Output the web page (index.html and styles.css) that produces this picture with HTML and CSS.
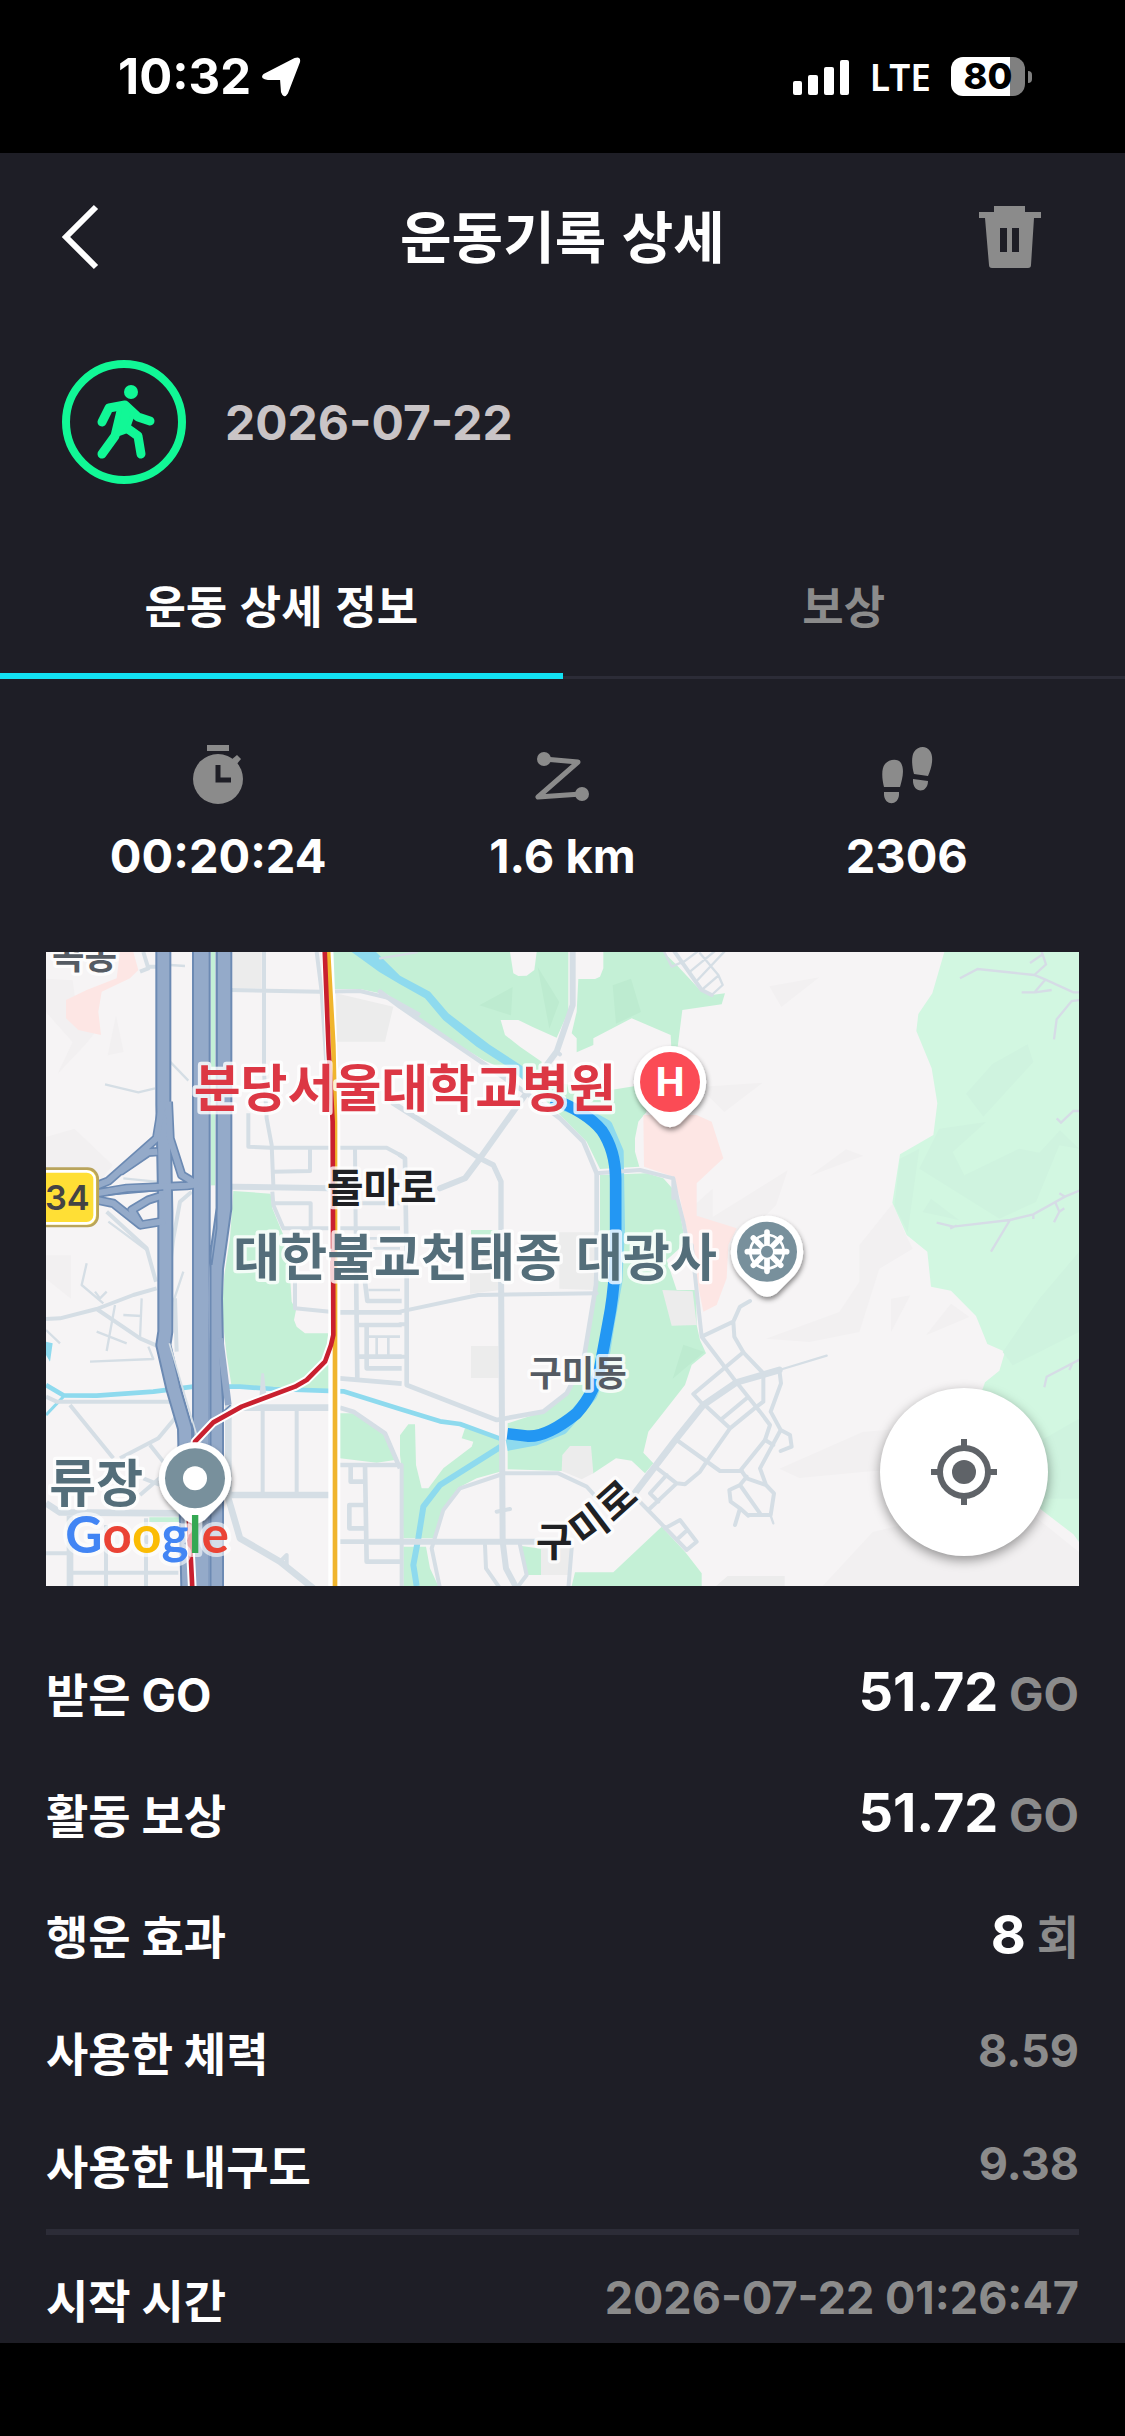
FILE: index.html
```html
<!DOCTYPE html>
<html lang="ko">
<head>
    <meta charset="UTF-8">
    <meta name="viewport" content="width=device-width, initial-scale=1">
    <title>운동기록 상세</title>
    <link rel="stylesheet" href="styles.css">
</head>
<body>
    <div class="status-bar">
        <div class="status-left">
            <span class="clock">10:32</span>
            <svg width="40" height="40" viewBox="0 0 40 40"><path d="M3 18 L34 2 Q39 0 38 5 L26 36 Q23 41 21 35 L20 22 L7 22 Q0 21 3 18 Z" fill="#fff" stroke="#fff" stroke-width="2"/></svg>
        </div>
        <div class="status-right">
            <svg width="57" height="36" viewBox="0 0 57 36" fill="#fff">
                <rect x="0" y="22" width="9" height="14" rx="2"/>
                <rect x="15" y="16" width="10" height="20" rx="2"/>
                <rect x="31" y="8" width="10" height="28" rx="2"/>
                <rect x="47" y="1" width="9" height="35" rx="2"/>
            </svg>
            <span class="network">LTE</span>
            <div class="battery"><span class="battery-level">80</span></div>
        </div>
    </div>

    <main>
        <header class="header">
            <button class="icon-button" aria-label="뒤로">
                <svg width="40" height="66" viewBox="0 0 40 66"><path d="M35 3 L5 33 L35 63" fill="none" stroke="#fff" stroke-width="6"/></svg>
            </button>
            <h1>운동기록 상세</h1>
            <button class="icon-button" aria-label="삭제">
                <svg width="62" height="62" viewBox="0 0 62 62"><path fill="#8b8b8b" fill-rule="evenodd" d="M15 0 H46 V6 H62 V12 H55 L52 59 Q52 62 49 62 H13 Q10 62 10 59 L6 12 H0 V6 H15 Z M21 22 V46 H28 V22 Z M33 22 V46 H40 V22 Z"/></svg>
            </button>
        </header>

        <div class="activity">
            <svg width="126" height="126" viewBox="0 0 126 126" fill="none" stroke="#11f896" stroke-linecap="round" stroke-linejoin="round">
                <circle cx="63" cy="63" r="58" stroke-width="8"/>
                <circle cx="70" cy="33" r="7" fill="#11f896" stroke="none"/>
                <path stroke-width="9" d="M41 63 L48 49 L64 46 L77 58 L89 62 M80 95 L77 77 L63 67"/>
                <path stroke-width="9" d="M41 95 L54 77 L60 52"/>
                <path fill="#11f896" stroke-width="4" d="M59 48 L67 46 L72 55 L66 72 L55 76 Z"/>
            </svg>
            <time class="date">2026-07-22</time>
        </div>

        <nav class="tabs">
            <button class="tab active">운동 상세 정보</button>
            <button class="tab">보상</button>
        </nav>

        <section class="stats">
            <div class="stat">
                <svg width="62" height="62" viewBox="0 0 62 62">
                    <g fill="#8b8b8b"><path d="M20 2 H42 V8 H20 Z"/><circle cx="31" cy="36" r="25"/><path d="M44 17 L50 12 L54 16 L49 22 Z"/></g>
                    <path d="M31 22 V37 H44" fill="none" stroke="#1e1e26" stroke-width="5"/>
                </svg>
                <span>00:20:24</span>
            </div>
            <div class="stat">
                <svg width="62" height="62" viewBox="0 0 62 62" fill="none" stroke="#8b8b8b" stroke-width="5" stroke-linecap="round" stroke-linejoin="round">
                    <path d="M13 16 L47 19 L7 54 L50 51"/>
                    <g fill="#8b8b8b" stroke="none"><circle cx="13" cy="16" r="7"/><circle cx="51" cy="51" r="7"/></g>
                </svg>
                <span>1.6 km</span>
            </div>
            <div class="stat">
                <svg width="62" height="62" viewBox="0 0 62 62" fill="#8b8b8b">
                    <path d="M8 44 C6 36 5 26 9 21 C13 16 22 15 25 20 C29 27 26 37 24 44 Z M8 49 H23 V52 C22 63 9 63 8 52 Z"/>
                    <path d="M38 31 C36 24 35 14 38 9 C42 3 50 2 54 8 C58 14 56 24 52 33 Z M37 36 L52 38 C52 51 36 51 37 36 Z"/>
                </svg>
                <span>2306</span>
            </div>
        </section>

        <div class="map">
            <svg class="map-canvas" viewBox="0 0 3099 1902" role="img" aria-label="운동 경로 지도">
                <defs>
                    <filter id="pin-shadow" x="-30%" y="-30%" width="160%" height="170%">
                        <feDropShadow dx="3" dy="9" stdDeviation="8" flood-opacity="0.45"/>
                    </filter>
                    <path id="pin" d="M0 -108 A108 108 0 0 1 81 72 L29 125 Q0 146 -29 125 L-81 72 A108 108 0 0 1 0 -108 Z" fill="#fff" filter="url(#pin-shadow)"/>
                </defs>
                <rect width="3099" height="1902" fill="#f6f4f5"/>

                <!-- hill shading -->
                <g fill="#f2f0f1">
                    <path d="M0 80 L80 85 L90 160 L160 225 L120 275 L35 365 L80 270 L0 180 Z M210 190 L233 300 L185 310 Z M0 555 L85 530 L200 640 L150 700 L0 660 Z M0 910 H75 V1040 L0 980 Z"/>
                    <path d="M2170 103 L2320 76 L2206 165 Z M1960 405 L2150 392 L2035 480 Z M1960 820 L2225 655 L2190 760 L2050 900 Z M2290 673 L2400 592 L2452 611 Z"/>
                    <path d="M2540 755 L2580 850 L2600 890 L2500 950 L2440 1140 L2290 1170 L2160 1160 L2380 1080 L2440 990 V880 Z M2535 1040 L2593 1030 L2535 1140 Z M2640 1150 L2715 1055 L2770 1095 Z"/>
                    <path d="M2200 1550 L2450 1440 L2560 1430 L2700 1540 L2450 1560 L2260 1578 Z M2330 1902 L2480 1740 L2900 1640 L3099 1800 V1902 Z"/>
                    <path d="M1900 800 L2000 710 V860 Z"/>
                </g>

                <!-- parks -->
                <g fill="#c4f0d6">
                    <path d="M850 0 H1567 V179 L1532 257 L1460 225 L1417 204 H1364 L1377 249 L1422 284 L1487 329 L1482 379 L1662 419 L1782 400 L1802 479 L1777 509 L1767 559 V599 L1780 644 L1662 651 L1622 569 L1542 489 L1432 379 L1312 324 L1222 269 L1062 159 L1027 129 L942 111 H860 Z"/>
                    <path d="M1597 81 H1647 L1662 74 L1672 49 V0 H1852 L1892 39 L1962 114 L1997 129 L2037 124 L2027 157 L1909 174 L1892 309 H1877 L1874 249 L1757 199 L1642 259 V279 L1592 301 V259 L1577 244 L1592 179 Z"/>
                    <path d="M1662 669 L1802 664 L1852 679 L1892 724 L1912 839 V879 L1862 924 L1892 1014 H1950 L1952 1119 L1962 1164 L1980 1204 L1937 1239 L1917 1299 L1807 1439 L1792 1502 L1822 1534 L1797 1564 L1757 1526 L1710 1519 L1642 1564 L1547 1557 L1385 1552 V1414 L1492 1379 L1562 1319 L1607 1239 L1637 1089 L1662 959 Z"/>
                    <path d="M562 717 L674 725 L679 769 L712 849 L732 969 L737 1049 L750 1074 L744 1104 L752 1124 L777 1144 H852 V1314 L682 1312 L557 1304 L542 1209 L527 1079 L535 969 L552 859 Z"/>
                    <path d="M882 1384 H922 L1017 1444 L1047 1524 L992 1532 L882 1519 Z M1062 1450 L1087 1417 H1107 L1110 1539 L1127 1609 H1147 L1192 1549 L1277 1484 L1282 1469 L1247 1459 L1257 1429 L1362 1459 V1559 L1292 1579 L1237 1607 L1192 1674 L1162 1759 H1072 L1067 1554 L1062 1509 Z"/>
                    <path d="M1072 1784 H1140 L1152 1849 L1177 1902 H1072 Z M1427 1782 L1485 1790 V1869 H1442 Z M1577 1902 L1587 1861 H1702 L1847 1724 L1917 1799 L1967 1864 V1902 Z M1275 834 H1362 V849 H1275 Z M310 1696 H400 V1710 H310 Z"/>
                    <path d="M495 0 H507 V700 H495 Z"/>
                </g>
                <path fill="#f6f4f5" d="M1392 0 H1472 L1465 54 L1442 71 L1417 72 L1402 64 Z"/>
                <path fill="#bdebd0" d="M1300 160 L1400 105 L1395 190 Z M1475 45 L1540 150 L1510 230 Z M1700 100 L1755 80 L1785 180 L1710 215 Z M1880 1280 L1912 1178 L1975 1200 Z"/>

                <!-- forest -->
                <path fill="#d2f7e1" d="M2695 0 L2659 124 L2617 186 L2611 237 L2657 349 L2674 454 L2662 549 L2562 607 L2539 752 L2582 849 L2644 899 L2655 1004 L2715 1016 L2790 1092 L2824 1176 L2877 1199 L2860 1256 L2817 1291 L2807 1319 L2932 1619 L2987 1674 L3082 1747 L3099 1770 V0 Z"/>
                <path fill="#cff3df" d="M2760 425 L2840 335 L2945 277 L2962 330 L2812 494 Z M2680 530 L2820 510 L2720 600 L2755 670 L2920 590 L2980 602 L3042 535 L3099 590 L3040 580 L2970 750 L2860 800 L2620 650 Z M2562 620 L2620 590 L2585 840 L2545 760 Z M2630 780 L2655 740 L2740 805 Z M2980 1040 L3099 900 V1140 L2900 1240 L2870 1200 Z M2960 1480 L3099 1400 V1640 L2990 1640 Z"/>

                <!-- hospital grounds and blocks -->
                <path fill="#fde6e4" d="M222 0 H262 L277 54 L252 79 L167 119 L157 179 L165 249 L97 234 L60 199 V144 L122 114 L212 79 Z M1792 489 H1952 L1997 509 L2032 619 L1952 694 V791 L2072 829 L2047 879 L2042 979 L2012 1059 L1972 1079 L1932 879 L1902 739 L1882 674 L1794 644 Z"/>
                <path fill="#ececec" d="M560 0 H647 V109 H560 Z M870 124 L1042 164 L1017 269 H872 Z M1275 1182 H1357 V1278 H1275 Z M1272 870 H1357 V1015 L1272 1025 Z M1540 841 H1647 V1014 L1540 1010 Z M1849 1014 L1940 1018 L1952 1119 L1877 1121 Z M1549 1509 L1572 1482 H1635 L1642 1564 L1607 1582 L1547 1557 Z M1485 1869 H1567 L1577 1789 L1485 1782 Z M2010 1902 L2045 1872 H2216 V1902 Z"/>

                <!-- stream -->
                <path fill="#8edaee" d="M917 0 H990 L1062 71 L1152 119 L1207 184 L1332 279 L1432 344 V385 L1392 349 L1292 284 L1192 204 L1137 139 L1062 97 L1000 60 Z M0 1169 L20 1174 L12 1229 L0 1209 Z"/>
                <g fill="none" stroke="#8edaee" stroke-linejoin="round">
                    <path stroke-width="34" d="M1552 459 L1610 480 L1682 520 L1716 599 L1720 829 L1712 989 L1690 1109 L1668 1249 L1637 1329 L1550 1430 L1467 1464 L1382 1480"/>
                    <path stroke-width="14" d="M0 1299 L52 1330 L152 1331 L322 1319 L442 1304 H582 L682 1311 L892 1318 L1062 1371 L1182 1408 L1242 1416 L1362 1460"/>
                    <path stroke-width="9" d="M52 1334 L0 1389"/>
                    <path stroke-width="18" d="M1364 1484 L1182 1599 L1132 1664 L1117 1759 L1102 1839 L1112 1902"/>
                </g>

                <!-- forest trails -->
                <g fill="none" stroke="#d6dce6" stroke-width="7" transform="translate(2082 -21)">
                    <path d="M660 100 L713 72 L883 90 L915 103 L1000 142 H1020 M883 90 L918 58 L905 20 M870 54 L905 30 M915 105 L885 140 M845 142 H885 L935 135 M1020 165 L995 168 L950 223 L942 283 M950 520 L963 533 L1000 498 H1020"/>
                    <path d="M590 833 L640 845 L810 825 L880 808 L975 755 L1020 736 M630 850 L650 842 M810 825 L753 920 M947 775 L958 800 L942 832 M958 800 L973 790 M958 745 L975 755 M880 808 V822 M913 1327 L920 1295 L1020 1243 M988 1275 L996 1258"/>
                </g>

                <!-- streets, west -->
                <g fill="none" stroke="#d5dee5" stroke-width="12" stroke-linejoin="round" transform="translate(-18 -21)">
                    <path d="M310 21 L325 70 L300 80 M325 65 H355 M672 21 V380 L680 520 L695 600 L700 720 M570 135 L840 140 L960 138 L1050 160 L1140 210 M830 21 L845 140 L862 400"/>
                    <path d="M625 505 V605 L690 608 H1040 L1090 635 M700 680 L810 678 V610 M945 610 L948 960 M697 740 L700 780 L730 850 H1080 M700 775 H812 V850 M950 775 H1080 M455 740 L420 770 L400 880 L390 960 M200 800 L320 910 L348 1010"/>
                    <path stroke-width="18" d="M575 725 L870 730"/>
                    <path stroke-width="7" d="M390 60 L435 63 M195 418 L295 442 L345 430 M390 350 L445 407 M250 700 L400 715 M205 830 L320 915 M140 955 L125 1020 L190 1075 M165 1040 L180 1060 L200 1040 M225 1080 L200 1218 M150 1250 L340 1242 L325 1205 M305 1060 L300 1180 M250 1110 L305 1113 M170 1160 L260 1195 M18 1155 L60 1195 M430 980 L400 1070"/>
                    <path d="M18 1122 L60 1120 L170 1092 L280 1050 L350 1030 M170 1092 L300 1180 L350 1202 M18 1355 L50 1370 H390 M90 1380 L220 1540 M240 1540 L355 1480 L405 1420 M330 1500 L370 1550 M405 1060 L410 1220 M300 1650 L370 1590 M310 1600 L360 1620"/>
                    <path stroke-width="20" d="M18 1675 L60 1702 L420 1705 M90 1705 V1930 M565 1380 V1660 L600 1780 L720 1850 L820 1930 M610 1388 H900 M575 1650 H870"/>
                    <path d="M18 1825 H90 M90 1883 H415 M198 1740 V1930 M318 1720 V1930 M668 1388 V1650 M770 1390 V1650 M765 1010 V1090 L870 1100 M720 1850 L740 1830 V1860"/>
                    <path stroke-width="14" d="M900 1388 L940 1400 L1035 1465 L1080 1570 M900 1560 H1085 M932 1560 V1610 H975 M975 1560 L980 1850 H1085 M975 1680 H928 V1750 H975 M900 1790 H1085 M900 1102 H1085 M950 1140 H1085 M980 1140 V1270 H1085 M950 1235 H1085 M948 960 L952 1305 M900 1300 L1085 1316 M975 1010 L982 1068 H1085"/>
                    <path stroke-width="8" d="M985 1175 H1080 M1010 1175 V1235 M1045 1175 V1235 M985 1035 H1080 M985 880 H1080 M1000 910 H1080"/>
                    <path fill="#d5dee5" stroke="none" d="M658 1360 L664 1285 H672 L680 1360 Z"/>
                </g>

                <!-- streets, centre and east -->
                <g fill="none" stroke="#d5dee5" stroke-width="12" stroke-linejoin="round" stroke-linecap="round" transform="translate(1062 -21)">
                    <path stroke-width="18" d="M518 15 V180 L470 320 L425 380 L240 640 L195 700 L120 730"/>
                    <path stroke-width="14" d="M-60 140 L0 185 L250 355 L380 445 L480 520 L550 590 L590 685 V960 L588 1020 L550 1250 L500 1345 L430 1400 L290 1425 L20 1320 V960 L15 640 L0 630"/>
                    <path stroke-width="16" d="M-20 475 L240 640 L280 660 L303 710 V960"/>
                    <path stroke-width="18" d="M303 960 L308 1790 L318 1870 L350 1930 M-90 1790 H500"/>
                    <path d="M590 685 L720 675 L820 700 L832 760 L850 830 L875 960 M820 700 V760 M470 320 L480 328 M0 1100 L235 1050 L590 1045 M0 1138 H20 M0 1235 H20"/>
                    <path stroke-width="7" d="M-60 40 L50 22 M790 15 L815 65 L850 50 M845 55 L895 18 M870 80 L945 18 M890 108 L975 18 M905 135 L955 92 M935 150 L968 120 L955 90 L900 25"/>
                    <path stroke-width="12" d="M820 15 L905 135 L935 150 M290 1700 L330 1692 M5 1560 V1930"/>
                    <path d="M308 1585 H475 L560 1625 L592 1660 M308 1587 L180 1630 L130 1695 L95 1810 L120 1930 M255 1800 L258 1870 L300 1930 M360 1800 L380 1890 L350 1930 M515 1810 L505 1930"/>
                    <path d="M875 900 L905 1175 L1000 1300 L1080 1400 L1110 1440 L1095 1485 L1020 1578 M905 1175 L1000 1130 L1020 1085 L1050 1068 M1000 1130 L1003 1175 L1030 1222 L1095 1290"/>
                    <path stroke-width="20" d="M700 1650 L830 1480 L910 1380 L1010 1312 L1138 1275"/>
                    <path d="M910 1380 L880 1347 L1030 1222 M920 1385 L990 1450 M965 1422 L1040 1360 M830 1485 L960 1578 H1025 M920 1550 L990 1450 L1070 1385 L1090 1370 V1290 M920 1550 L900 1580 L855 1618 L830 1615 L765 1565 M830 1615 L745 1695 M800 1590 L750 1645 L775 1670"/>
                    <path d="M700 1650 L860 1815 L890 1790 L840 1725 L795 1750 M835 1780 L862 1755 M1025 1578 L1040 1600 L1098 1620 L1122 1645 L1112 1710 H1045 M1040 1595 L1020 1620 L1080 1705 M1020 1620 L988 1635 L992 1670 L1020 1690 M1095 1485 L1120 1500 M1020 1690 L1005 1740 M1020 1690 L1045 1712 M1138 1275 L1143 1315 L1112 1400 L1142 1455 L1080 1570 L1098 1620 M1142 1455 L1170 1470 L1175 1505 L1142 1518"/>
                    <path stroke-width="7" d="M1138 1275 L1280 1232 M1112 1712 L1120 1735"/>
                </g>

                <!-- expressways -->
                <g fill="none" stroke-linejoin="round" transform="translate(-18 -21)">
                    <g stroke="#6c8ab3">
                        <path stroke-width="48" d="M370 15 V480 L376 800 V1160 L370 1200 L400 1330 L435 1450 L445 1930"/>
                        <path stroke-width="56" d="M484 15 V1930"/>
                        <path stroke-width="50" d="M552 15 V790 L527 970 L524 1060 L527 1200 V1930"/>
                        <path stroke-width="28" d="M170 722 L205 708 L350 580 L368 470 M170 745 L260 730 L440 722 L470 718 M170 765 L220 775 L302 840 L375 828 M385 470 L390 580 L425 690 L475 720 M372 750 L325 765 L275 795 L302 840 M352 620 L325 622 L240 680"/>
                    </g>
                    <g stroke="#94aac9">
                        <path stroke-width="36" d="M370 15 V480 L376 800 V1160 L370 1200 L400 1330 L435 1450 L445 1930"/>
                        <path stroke-width="44" d="M484 15 V1930"/>
                        <path stroke-width="38" d="M552 15 V790 L527 970 L524 1060 L527 1200 V1930"/>
                        <path stroke-width="18" d="M170 722 L205 708 L350 580 L368 470 M170 745 L260 730 L440 722 L470 718 M170 765 L220 775 L302 840 L375 828 M385 470 L390 580 L425 690 L475 720 M372 750 L325 765 L275 795 L302 840 M352 620 L325 622 L240 680"/>
                    </g>
                    <path stroke="#6c8ab3" stroke-width="5" d="M205 750 L370 735 M512 900 V1930 M530 21 V850 L515 960 M540 1220 L550 1400 L572 1380"/>
                    <path stroke="#94aac9" stroke-width="20" d="M540 1180 L565 1380"/>
                    <path stroke="#d5dee5" stroke-width="5" d="M388 1195 L470 1470"/>
                </g>

                <!-- subway lines -->
                <g fill="none" stroke-linejoin="round" transform="translate(-18 -21)">
                    <path stroke="#fff" stroke-width="36" d="M862 15 L874 320 L883 530 V1930"/>
                    <path stroke="#fff" stroke-width="26" d="M880 1150 L873 1200 L855 1250 L800 1305 L765 1325 L605 1385 L520 1432 L465 1490 L447 1660 V1730 L457 1930"/>
                    <path stroke="#f0b52d" stroke-width="14" d="M864 15 L880 300 L885 530 V1930"/>
                    <path stroke="#c9202f" stroke-width="14" d="M854 15 L866 320 L878 530 L880 1170 L873 1200 L855 1250 L800 1305 L765 1325 L605 1385 L520 1432 L465 1490 L447 1660 V1730 L457 1930"/>
                </g>

                <!-- walked route -->
                <path fill="none" stroke="#2397f3" stroke-width="35" d="M1517 440 Q1622 480 1667 535 Q1708 595 1709 680 V880 Q1707 1010 1687 1110 L1665 1229 Q1650 1320 1592 1384 Q1500 1458 1442 1452 L1384 1445"/>

                <!-- route number -->
                <rect x="-60" y="650" width="215" height="172" rx="30" fill="#ffdf35" stroke="#b9a45c" stroke-width="8"/>
                <rect x="-60" y="658" width="206" height="156" rx="24" fill="none" stroke="#fff" stroke-width="8"/>
                <text class="badge-text" x="-3" y="773">34</text>

                <!-- place names -->
                <text class="label label-area" x="213" y="51" text-anchor="end">곡동</text>
                <text class="label label-hospital" x="443" y="465">분당서울대학교병원</text>
                <text class="label label-road" x="843" y="750">돌마로</text>
                <text class="label label-place" x="562" y="973">대한불교천태종 대광사</text>
                <text class="label label-area" x="1450" y="1302">구미동</text>
                <text class="label label-place" x="10" y="1649">류장</text>
                <text class="label label-road" x="1470" y="1812">구</text>
                <text class="label label-road" transform="translate(1612 1786) rotate(-37)">미</text>
                <text class="label label-road" transform="translate(1700 1714) rotate(-42)">로</text>

                <!-- pins -->
                <g transform="translate(1872 390)">
                    <use href="#pin"/>
                    <circle r="90" fill="#fb4b55"/>
                    <text class="pin-letter" y="42" text-anchor="middle">H</text>
                </g>
                <g transform="translate(2163 899)">
                    <use href="#pin"/>
                    <circle r="90" fill="#78909c"/>
                    <g fill="none" stroke="#fff" stroke-linecap="round">
                        <circle r="50" stroke-width="8"/>
                        <path stroke-width="17" d="M0 -59 V59 M-59 0 H59 M-41 -41 L41 41 M41 -41 L-41 41"/>
                    </g>
                    <circle r="18" fill="#78909c"/>
                </g>
                <g transform="translate(447 1579)">
                    <use href="#pin"/>
                    <circle r="90" fill="#78909c"/>
                    <circle r="36" fill="#fff"/>
                </g>

                <text class="google" x="58" y="1802"><tspan fill="#4285f4">G</tspan><tspan fill="#ea4335">o</tspan><tspan fill="#fbbc04">o</tspan><tspan fill="#4285f4">g</tspan><tspan fill="#34a853">l</tspan><tspan fill="#ea4335">e</tspan></text>
            </svg>
            <button class="locate" aria-label="내 위치">
                <svg width="66" height="66" viewBox="0 0 66 66">
                    <circle cx="33" cy="33" r="24" fill="none" stroke="#5f6368" stroke-width="6"/>
                    <circle cx="33" cy="33" r="12" fill="#5f6368"/>
                    <path d="M33 0 V8 M33 58 V66 M0 33 H8 M58 33 H66" stroke="#5f6368" stroke-width="6"/>
                </svg>
            </button>
        </div>

        <dl class="details">
            <div class="row row-large"><dt>받은 GO</dt><dd><strong>51.72</strong> <span class="unit">GO</span></dd></div>
            <div class="row row-large"><dt>활동 보상</dt><dd><strong>51.72</strong> <span class="unit">GO</span></dd></div>
            <div class="row row-large"><dt>행운 효과</dt><dd><strong>8</strong> <span class="unit">회</span></dd></div>
            <div class="row"><dt>사용한 체력</dt><dd>8.59</dd></div>
            <div class="row"><dt>사용한 내구도</dt><dd>9.38</dd></div>
        </dl>
        <dl class="details details-time">
            <div class="row"><dt>시작 시간</dt><dd>2026-07-22 01:26:47</dd></div>
        </dl>
    </main>
</body>
</html>
```
FILE: styles.css
```css
* {
    box-sizing: border-box;
}
body {
    margin: 0;
    height: 100vh;
    display: flex;
    flex-direction: column;
    padding-bottom: 93px;
    background: #000;
    color: #fff;
    font-family: Inter, "Noto Sans CJK KR", sans-serif;
    font-weight: 700;
}
button {
    border: none;
    padding: 0;
    background: none;
    font: inherit;
    cursor: pointer;
}
svg {
    display: block;
}
.status-bar {
    flex: none;
    height: 153px;
    padding: 0 93px 0 118px;
    display: flex;
    align-items: center;
    justify-content: space-between;
}
.status-left {
    display: flex;
    align-items: center;
    gap: 10px;
}
.clock {
    font-size: 49px;
}
.status-right {
    display: flex;
    align-items: center;
    gap: 20px;
}
.network {
    font-family: "Noto Sans", sans-serif;
    font-size: 37px;
    font-weight: 600;
}
.battery {
    position: relative;
    width: 74px;
    height: 39px;
    margin-right: 7px;
    border-radius: 12px;
    background: linear-gradient(to right, #fff 80%, #808080 80%);
    display: flex;
    align-items: center;
    justify-content: center;
}
.battery::after {
    content: "";
    position: absolute;
    right: -7px;
    width: 4px;
    height: 12px;
    border-radius: 0 4px 4px 0;
    background: #808080;
}
.battery-level {
    color: #000;
    font-size: 36px;
    line-height: 39px;
    font-weight: 800;
}
main {
    flex: 1;
    min-height: 0;
    overflow: hidden;
    background: #1e1e26;
}
.header {
    height: 168px;
    padding: 0 84px 0 61px;
    display: grid;
    grid-template-columns: 85px 1fr 62px;
    align-items: center;
}
.header h1 {
    margin: 0;
    padding-bottom: 6px;
    font-family: "Noto Sans CJK KR", sans-serif;
    font-size: 56px;
    line-height: 80px;
    text-align: center;
}
.activity {
    padding: 38px 61px 50px;
    display: flex;
    align-items: center;
    gap: 38px;
}
.date {
    color: #c9c4c6;
    font-size: 48px;
}
.tabs {
    height: 144px;
    display: grid;
    grid-template-columns: 1fr 1fr;
}
.tab {
    padding-bottom: 6px;
    box-shadow: inset 0 -3px #2c2c37;
    color: #8b8b8b;
    font-family: "Noto Sans CJK KR", sans-serif;
    font-size: 45px;
    font-weight: 700;
}
.tab.active {
    box-shadow: inset 0 -6px #12e2f2;
    color: #fff;
}
.stats {
    padding: 64px 46px 66px;
    display: grid;
    grid-template-columns: repeat(3, 1fr);
}
.stat {
    display: flex;
    flex-direction: column;
    align-items: center;
    gap: 21px;
    font-size: 47px;
    line-height: 60px;
}
.map {
    position: relative;
    margin: 0 46px;
}
.map-canvas {
    width: 100%;
    height: auto;
}
.label {
    font-family: "Noto Sans CJK KR", sans-serif;
    font-weight: 700;
    paint-order: stroke;
    stroke: rgba(255, 255, 255, 0.8);
    stroke-width: 20px;
    stroke-linejoin: round;
}
.label-hospital {
    font-size: 153px;
    fill: #dc3744;
}
.label-place {
    font-size: 153px;
    fill: #546e7a;
}
.label-road {
    font-size: 119px;
    fill: #202124;
}
.label-area {
    font-size: 106px;
    fill: #555b63;
}
.badge-text {
    font-family: Inter, sans-serif;
    font-size: 103px;
    font-weight: 600;
    fill: #444;
}
.pin-letter {
    font-family: Roboto, sans-serif;
    font-size: 124px;
    font-weight: 700;
    fill: #fff;
}
.google {
    font-family: Lato, sans-serif;
    font-size: 154px;
    font-weight: 700;
    paint-order: stroke;
    stroke: rgba(255, 255, 255, 0.6);
    stroke-width: 24px;
    stroke-linejoin: round;
}
.locate {
    position: absolute;
    right: 31px;
    bottom: 30px;
    width: 168px;
    height: 168px;
    border-radius: 50%;
    background: #fff;
    box-shadow: 0 4px 12px rgba(0, 0, 0, 0.4);
    display: flex;
    align-items: center;
    justify-content: center;
}
.details {
    margin: 45px 46px 0;
}
.details-time {
    margin-top: 9px;
    padding-top: 6px;
    border-top: 6px solid #2c2c37;
}
.row {
    height: 113px;
    display: flex;
    align-items: center;
    justify-content: space-between;
    font-size: 46px;
}
.row-large {
    height: 121px;
}
.row dd {
    margin: 0;
    color: #8b8b8b;
    font-size: 45px;
}
.row dd strong {
    color: #fff;
    font-size: 54px;
    font-weight: 700;
}
.row .unit {
    font-size: 46px;
}
```
